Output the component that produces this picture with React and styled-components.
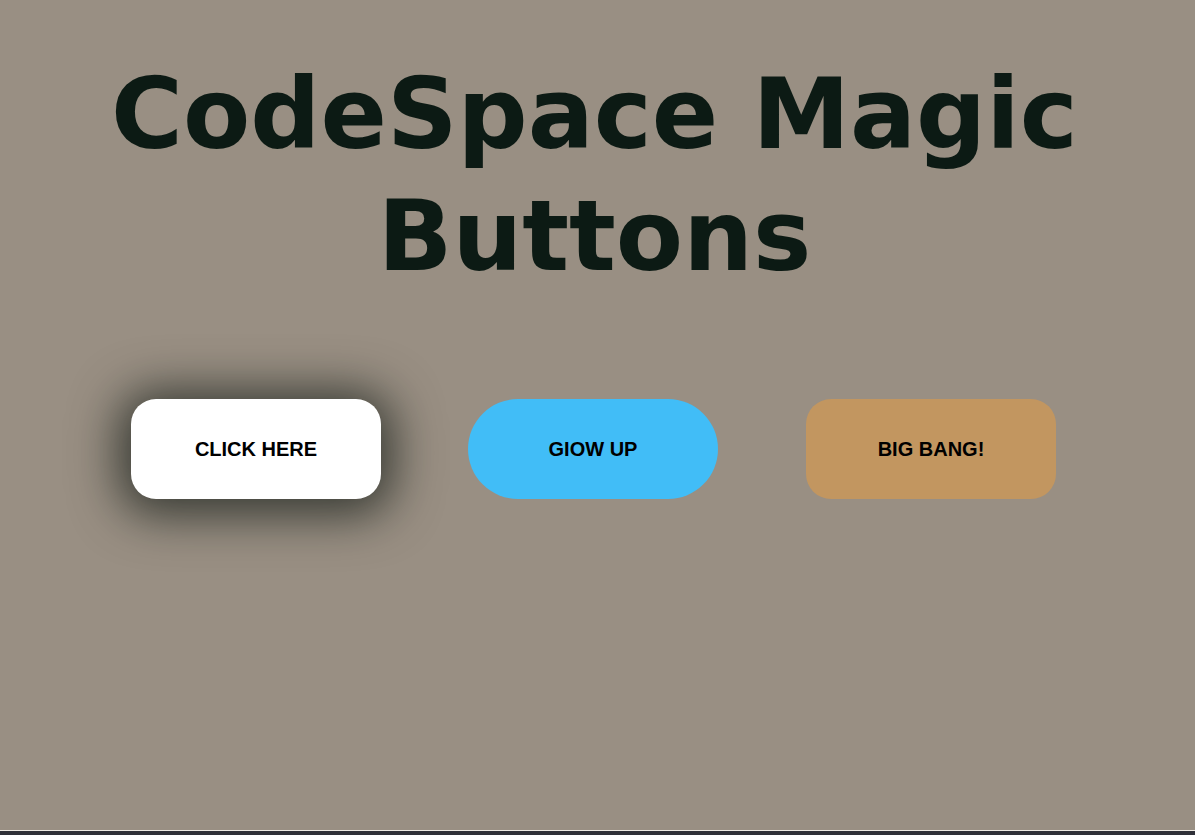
import React from 'react';
import { styled, createGlobalStyle } from 'styled-components';

const GlobalStyle = createGlobalStyle`
  html, body {
    margin: 0;
    padding: 0;
    background: #2f3038;
  }
`;

const App = () => {
  return (
    <>
      <GlobalStyle />
      <Page>
        <Title>CodeSpace Magic Buttons</Title>
        <ButtonRow>
          <MagicButton $bg="#ffffff" $radius="25px" $glow>
            CLICK HERE
          </MagicButton>
          <MagicButton $bg="#41bdf7" $radius="50px">
            GIOW UP
          </MagicButton>
          <MagicButton $bg="#c29660" $radius="25px">
            BIG BANG!
          </MagicButton>
        </ButtonRow>
      </Page>
    </>
  );
};

export default App;

const Page = styled.div`
  height: 831px;
  background: #998f83;
  border-bottom: 1px solid #efebe4;
  display: flex;
  flex-direction: column;
  align-items: center;
  box-sizing: border-box;
  padding-top: 53px;
`;

const Title = styled.h1`
  margin: 0;
  width: 1100px;
  font-family: 'DejaVu Sans', Verdana, sans-serif;
  font-weight: 700;
  font-size: 98px;
  line-height: 122px;
  color: #0c1a14;
  text-align: center;
  transform: translateX(-3px);
`;

const ButtonRow = styled.div`
  align-self: stretch;
  display: flex;
  gap: 87px;
  padding-left: 131px;
  margin-top: 102px;
`;

const MagicButton = styled.button`
  width: 250px;
  height: 100px;
  border: none;
  border-radius: ${(p) => p.$radius};
  background: ${(p) => p.$bg};
  color: #000;
  font-family: 'Liberation Sans', Arial, sans-serif;
  font-weight: 700;
  font-size: 20px;
  cursor: pointer;
  box-shadow: ${(p) =>
    p.$glow ? '0 4px 48px 12px rgba(12, 20, 16, 0.7)' : 'none'};

  &:last-child {
    margin-left: 1px;
  }
`;
